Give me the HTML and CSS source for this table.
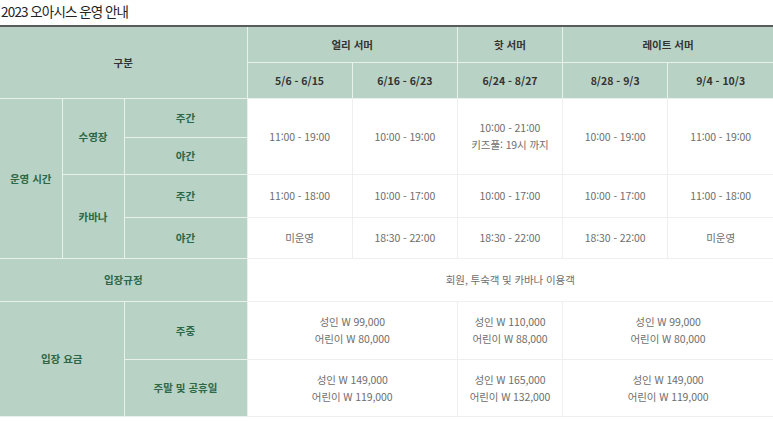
FILE: index.html
```html
<!DOCTYPE html>
<html lang="ko">
<head>
<meta charset="utf-8">
<link rel="stylesheet" href="styles.css">
</head>
<body>
<h2 class="title">2023 오아시스 운영 안내</h2>
<table class="info">
  <colgroup>
    <col class="c-a"><col class="c-b"><col class="c-c">
    <col><col><col><col><col>
  </colgroup>
  <thead>
    <tr class="r-h1">
      <th colspan="3" rowspan="2" class="hd">구분</th>
      <th colspan="2" class="hd">얼리 서머</th>
      <th class="hd">핫 서머</th>
      <th colspan="2" class="hd">레이트 서머</th>
    </tr>
    <tr class="r-h2">
      <th class="hd">5/6 - 6/15</th>
      <th class="hd">6/16 - 6/23</th>
      <th class="hd">6/24 - 8/27</th>
      <th class="hd">8/28 - 9/3</th>
      <th class="hd">9/4 - 10/3</th>
    </tr>
  </thead>
  <tbody>
    <tr class="r1">
      <th rowspan="4" class="sh">운영 시간</th>
      <th rowspan="2" class="sh">수영장</th>
      <th class="sh">주간</th>
      <td rowspan="2">11:00 - 19:00</td>
      <td rowspan="2">10:00 - 19:00</td>
      <td rowspan="2">10:00 - 21:00<br>키즈풀: 19시 까지</td>
      <td rowspan="2">10:00 - 19:00</td>
      <td rowspan="2">11:00 - 19:00</td>
    </tr>
    <tr class="r2">
      <th class="sh">야간</th>
    </tr>
    <tr class="r3">
      <th rowspan="2" class="sh">카바나</th>
      <th class="sh">주간</th>
      <td>11:00 - 18:00</td>
      <td>10:00 - 17:00</td>
      <td>10:00 - 17:00</td>
      <td>10:00 - 17:00</td>
      <td>11:00 - 18:00</td>
    </tr>
    <tr class="r4">
      <th class="sh">야간</th>
      <td>미운영</td>
      <td>18:30 - 22:00</td>
      <td>18:30 - 22:00</td>
      <td>18:30 - 22:00</td>
      <td>미운영</td>
    </tr>
    <tr class="r5">
      <th colspan="3" class="sh">입장규정</th>
      <td colspan="5">회원, 투숙객 및 카바나 이용객</td>
    </tr>
    <tr class="r6">
      <th colspan="2" rowspan="2" class="sh">입장 요금</th>
      <th class="sh">주중</th>
      <td colspan="2">성인 W 99,000<br>어린이 W 80,000</td>
      <td>성인 W 110,000<br>어린이 W 88,000</td>
      <td colspan="2">성인 W 99,000<br>어린이 W 80,000</td>
    </tr>
    <tr class="r7">
      <th class="sh">주말 및 공휴일</th>
      <td colspan="2">성인 W 149,000<br>어린이 W 119,000</td>
      <td>성인 W 165,000<br>어린이 W 132,000</td>
      <td colspan="2">성인 W 149,000<br>어린이 W 119,000</td>
    </tr>
  </tbody>
</table>
</body>
</html>
```

FILE: styles.css
```css
html, body {
  margin: 0;
  padding: 0;
  background: #fff;
}
body {
  font-family: "Noto Sans CJK KR", "Noto Sans", sans-serif;
}
.title {
  margin: 0;
  height: 25px;
  padding-left: 1px;
  font-size: 13.5px;
  font-weight: 400;
  letter-spacing: -0.8px;
  word-spacing: -0.5px;
  line-height: 22px;
  color: #222;
}
.info {
  width: 773px;
  table-layout: fixed;
  border-collapse: collapse;
  border-top: 2px solid #5b5b5b;
  border-bottom: 1px solid #eaeaea;
}
.c-a { width: 62px; }
.c-b { width: 62px; }
.c-c { width: 123px; }
.info th, .info td {
  padding: 0;
  text-align: center;
  vertical-align: middle;
  font-size: 10.5px;
  line-height: 17px;
}
.info th {
  background: #b8d2c5;
  border: 1px solid #e9f1ec;
  font-weight: 700;
}
.hd { color: #333; }
.sh { color: #2c6747; }
.info td {
  border: 1px solid #efefef;
  color: #6e6e6e;
  font-weight: 400;
  letter-spacing: -0.1px;
}
.r-h1 { height: 36px; }
.r-h2 { height: 36px; }
.r1 { height: 39px; }
.r2 { height: 37px; }
.r3 { height: 43px; }
.r4 { height: 41px; }
.r5 { height: 43px; }
.r6 { height: 58px; }
.r7 { height: 57px; }
.info tr > :last-child { border-right: 0; }
.info tr > :first-child { border-left: 0; }
```
